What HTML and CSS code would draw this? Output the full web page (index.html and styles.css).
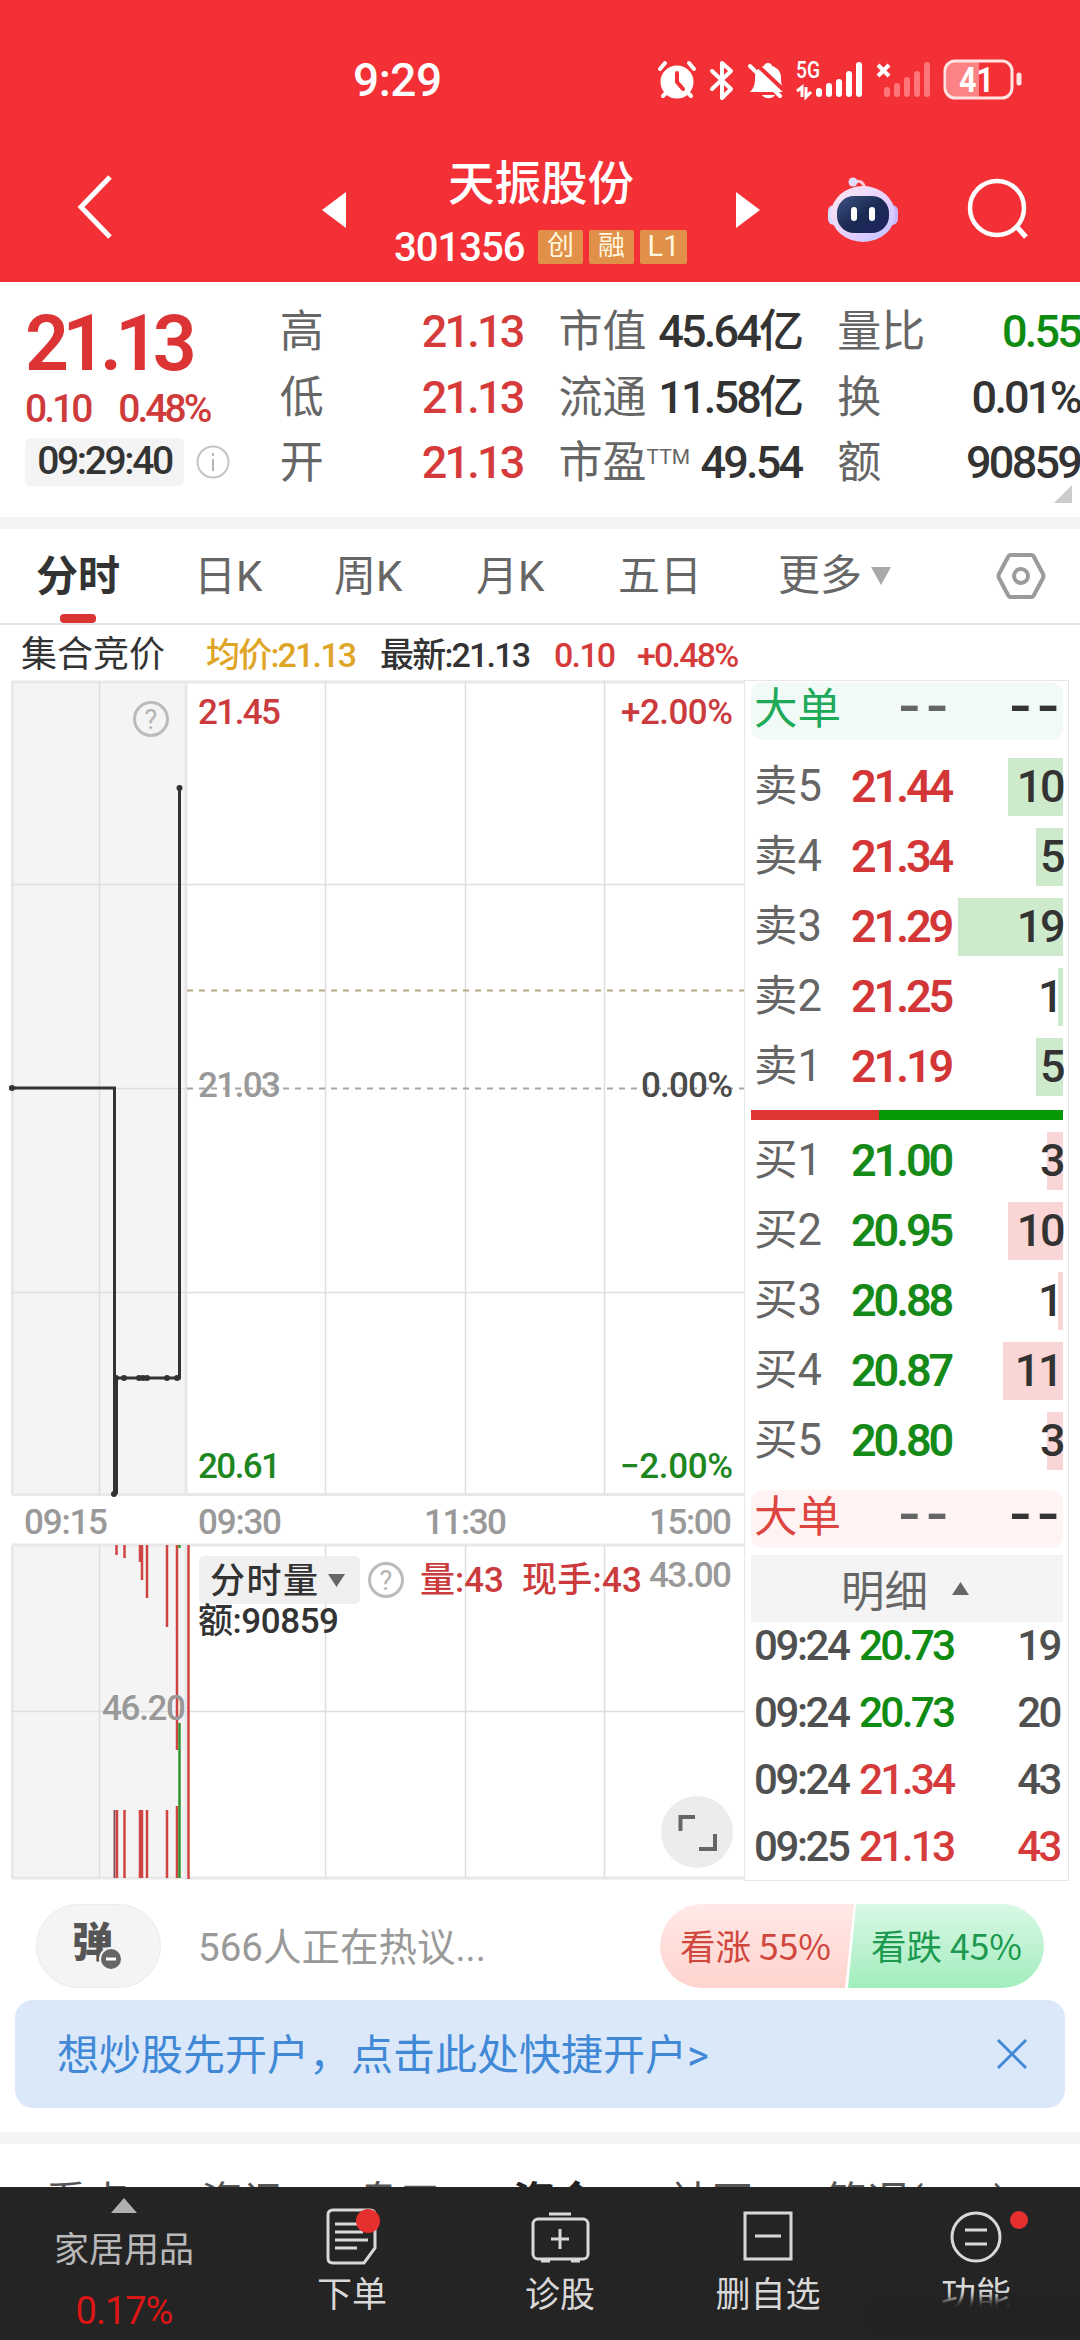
FILE: index.html
```
<!DOCTYPE html>
<html lang="zh-CN">
<head>
  <meta charset="UTF-8">
  <title>天振股份 301356</title>
  <link rel="stylesheet" href="styles.css">
</head>
<body>
  <header id="siteHeader">
    <div class="status-bar">
      <span class="clock">9:29</span>
      <svg class="status-icons" width="368" height="44" viewBox="0 0 368 44">
        <!-- alarm -->
        <g stroke="#fff" stroke-width="4" stroke-linecap="round" fill="none">
          <circle cx="20" cy="23" r="15" fill="#fff" stroke-width="3"/>
          <path d="M3 10l5-6M37 10l-5-6M6 37l4-4M34 37l-4-4"/>
          <path d="M20 14v9l6 7" stroke="#f23036"/>
        </g>
        <!-- bluetooth -->
        <path d="M55 12l19 18-9 9V4l9 8-19 18" fill="none" stroke="#fff" stroke-width="4" stroke-linejoin="round" stroke-linecap="round"/>
        <!-- muted bell -->
        <g transform="translate(-3 0)">
          <path d="M96 33c4-4 5-8 5-14 0-8 4-11 9-12 0-4 8-4 8 0 6 2 9 6 9 12 0 6 1 10 5 14z" fill="#fff"/>
          <path d="M108 36a7 5 0 0 0 13 0z" fill="#fff"/>
          <path d="M100 3l36 34" stroke="#f23036" stroke-width="4"/>
          <path d="M96 7l30 30" stroke="#fff" stroke-width="4" stroke-linecap="round"/>
        </g>
        <text x="139" y="19" class="net" textLength="24" lengthAdjust="spacingAndGlyphs">5G</text>
        <path d="M140 32l5-4v10M149 28v10l5-5" fill="none" stroke="#fff" stroke-width="3"/>
        <path d="M162 36v-3M172 36v-8M182 36v-12M192 36V16M202 36V7" transform="translate(0 -1)" stroke="#fff" stroke-width="6" stroke-linecap="round"/>
        <path d="M221 6l11 11M232 6l-11 11" stroke="#fff" stroke-width="4"/>
        <path d="M230 36v-4M240 36v-8M250 36V22M260 36V16M270 36V7" transform="translate(0 -1)" stroke="#ff7678" stroke-width="6" stroke-linecap="round"/>
        <path d="M298 3h24v36h-24q-8 0-8-8V11q0-8 8-8z" fill="#fb8385"/>
        <rect x="288" y="2" width="67" height="37" rx="10" fill="none" stroke="#ffe3e3" stroke-width="3"/>
        <path d="M362 16v8" stroke="#ffe3e3" stroke-width="5" stroke-linecap="round"/>
        <text x="302" y="33" class="battery" textLength="35" lengthAdjust="spacingAndGlyphs">41</text>
      </svg>
    </div>
    <div class="title-bar">
      <svg class="back" width="40" height="68" viewBox="0 0 40 68"><path d="M35 3L6 33l29 30" fill="none" stroke="#fff" stroke-width="5"/></svg>
      <svg class="prev" width="24" height="36" viewBox="0 0 24 36"><path d="M24 0v36L0 18z" fill="#fff"/></svg>
      <div class="stock">
        <h1>天振股份</h1>
        <div class="code"><span>301356</span><i>创</i><i>融</i><i class="l1">L1</i></div>
      </div>
      <svg class="next" width="24" height="36" viewBox="0 0 24 36"><path d="M0 0v36l24-18z" fill="#fff"/></svg>
      <svg class="robot" width="72" height="68" viewBox="0 0 72 68">
        <defs>
          <linearGradient id="head" x1="0" y1="0" x2="1" y2="1"><stop offset="0" stop-color="#ffeaf2"/><stop offset=".6" stop-color="#e3ceff"/><stop offset="1" stop-color="#b9c4ff"/></linearGradient>
          <linearGradient id="face" x1="0" y1="0" x2="1" y2="1"><stop offset="0" stop-color="#3d5282"/><stop offset=".5" stop-color="#1b2a52"/><stop offset="1" stop-color="#1e2461"/></linearGradient>
        </defs>
        <path d="M27 6c6-2 9 0 11 6" fill="none" stroke="#ffc9d9" stroke-width="3"/>
        <circle cx="26" cy="6" r="4.500" fill="#e2dcff"/>
        <rect x="1" y="29" width="12" height="20" rx="6" fill="#d9dcff"/>
        <rect x="59" y="29" width="12" height="20" rx="6" fill="#c9b6fa"/>
        <ellipse cx="36" cy="38" rx="32" ry="28" fill="url(#head)"/>
        <rect x="10" y="20" width="52" height="37" rx="17" fill="url(#face)"/>
        <path d="M27 34v8M45 34v8" stroke="#fff" stroke-width="6" stroke-linecap="round"/>
      </svg>
      <svg class="search" width="62" height="62" viewBox="0 0 62 62"><circle cx="30" cy="30" r="27" fill="none" stroke="#fff" stroke-width="4.500"/><path d="M49 48l10 11" stroke="#fff" stroke-width="5"/></svg>
    </div>
  </header>

  <section id="quote">
    <div class="now">
      <div class="price">21.13</div>
      <div class="change"><span>0.10</span><span>0.48%</span></div>
      <div class="stamp">
        <span>09:29:40</span>
        <svg width="36" height="36" viewBox="0 0 36 36"><circle cx="18" cy="18" r="15.500" fill="none" stroke="#c4c4c4" stroke-width="2"/><path d="M18 15v12M18 9v3" stroke="#b5b5b5" stroke-width="2"/></svg>
      </div>
    </div>
    <dl>
      <div><dt>高</dt><dd class="up">21.13</dd></div>
      <div><dt>低</dt><dd class="up">21.13</dd></div>
      <div><dt>开</dt><dd class="up">21.13</dd></div>
    </dl>
    <dl>
      <div><dt>市值</dt><dd>45.64亿</dd></div>
      <div><dt>流通</dt><dd>11.58亿</dd></div>
      <div><dt>市盈<sup>TTM</sup></dt><dd>49.54</dd></div>
    </dl>
    <dl>
      <div><dt>量比</dt><dd class="down">0.55</dd></div>
      <div><dt>换</dt><dd>0.01%</dd></div>
      <div><dt>额</dt><dd>90859</dd></div>
    </dl>
    <span class="corner"></span>
  </section>

  <nav id="periods">
    <a class="active">分时</a>
    <a>日K</a>
    <a>周K</a>
    <a>月K</a>
    <a>五日</a>
    <a class="more">更多<svg width="22" height="18" viewBox="0 0 22 18"><path d="M1 0h20L11 18z" fill="#a9a9a9"/></svg></a>
    <svg class="settings" width="50" height="48" viewBox="0 0 50 48"><path d="M15 3h20q2 0 3 2l9 17q1 2 0 4l-9 17q-1 2-3 2H15q-2 0-3-2L3 26q-1-2 0-4l9-17q1-2 3-2z" fill="none" stroke="#9b9b9b" stroke-width="4"/><circle cx="25" cy="24" r="7" fill="none" stroke="#9b9b9b" stroke-width="4"/></svg>
  </nav>

  <div id="summary">
    <span class="name">集合竞价</span>
    <span class="avg">均价:21.13</span>
    <span class="last">最新:21.13</span>
    <span class="up diff">0.10</span>
    <span class="up">+0.48%</span>
  </div>

  <main id="market">
    <div id="charts">
      <svg width="744" height="1201" viewBox="0 680 744 1201">
        <g class="plot">
          <rect x="12" y="681" width="175" height="813" fill="#f4f4f4"/>
          <rect x="12" y="1545" width="175" height="333" fill="#f4f4f4"/>
          <path class="frame" d="M12 682H744M12 1494.500H744M12 1545H744M12 1878H744M12.500 681V1494M12.500 1545V1878M186 681V1494M186 1545V1878"/>
          <path class="grid" d="M12 884.500H744M12 1088.500H187M12 1292.500H744M12 1711.500H744M99.500 681V1494M325.500 681V1494M465.500 681V1494M604.500 681V1494M99.500 1545V1878M325.500 1545V1878M465.500 1545V1878M604.500 1545V1878"/>
          <path d="M187 990.500H744" stroke="#b3ab85" stroke-width="2" stroke-dasharray="6 6"/>
          <path d="M187 1088.500H744" stroke="#a5a5a5" stroke-width="2" stroke-dasharray="6 6"/>
        </g>

        <!-- auction price line -->
        <path d="M9 1088H114.500V1494M114 1378H179.500V788" fill="none" stroke="#333" stroke-width="3"/>
        <path d="M116 1378V1494" stroke="#333" stroke-width="4"/>
        <g fill="#333">
          <circle cx="12" cy="1088" r="3"/><circle cx="114" cy="1494" r="3"/><circle cx="116" cy="1378" r="3"/>
          <circle cx="124" cy="1378" r="3"/><circle cx="139" cy="1378" r="3"/><circle cx="143" cy="1378" r="3"/>
          <circle cx="147" cy="1378" r="3"/><circle cx="167" cy="1378" r="3"/><circle cx="177" cy="1378" r="3"/>
          <circle cx="179.500" cy="788" r="3"/>
        </g>

        <g class="axis">
          <text class="up" x="198" y="724" textLength="83">21.45</text>
          <text class="up" x="621" y="724" textLength="112">+2.00%</text>
          <text x="198" y="1097" textLength="83">21.03</text>
          <text class="dark" x="641" y="1097" textLength="92">0.00%</text>
          <text class="down" x="198" y="1478" textLength="83">20.61</text>
          <text class="down" x="620" y="1478" textLength="113">−2.00%</text>
          <text x="24" y="1534" textLength="84">09:15</text>
          <text x="198" y="1534" textLength="84">09:30</text>
          <text x="424" y="1534" textLength="83">11:30</text>
          <text x="649" y="1534" textLength="83">15:00</text>
          <text x="649" y="1587" textLength="83">43.00</text>
        </g>

        <!-- volume bars -->
        <g stroke="#cf4443" stroke-width="2.500">
          <path d="M116.500 1545V1555M124.500 1545V1558M140 1545V1562M142 1545V1580M147 1545V1598M167 1545V1627M177 1545V1750M188.500 1545V1879"/>
          <path d="M117 1810V1878M124.500 1810V1878M140 1810V1878M142 1810V1878M147 1810V1878M167 1810V1878M177 1806V1878"/>
        </g>
        <path d="M114.500 1810V1878" stroke="#8a5054" stroke-width="2"/>
        <path d="M179.500 1545V1548M179.500 1723V1878" stroke="#2f962f" stroke-width="2.500"/>
        <g class="axis"><text x="102" y="1720" textLength="84">46.20</text></g>

        <g class="help">
          <circle cx="151" cy="719" r="16.500"/><text x="151" y="729">?</text>
          <circle cx="386" cy="1580" r="16.500"/><text x="386" y="1590">?</text>
        </g>

        <rect x="199" y="1556" width="161" height="48" rx="5" fill="#f0f0f0"/>
        <path d="M328 1574h17l-8.500 13z" fill="#666"/>
        <g class="legend">
          <text x="210" y="1593" textLength="108">分时量</text>
          <text class="up" x="420" y="1592" textLength="84">量:43</text>
          <text class="up" x="522" y="1592" textLength="120">现手:43</text>
          <text x="198" y="1633" textLength="141">额:90859</text>
        </g>

        <circle cx="697" cy="1832" r="36" fill="#ececec"/>
        <path d="M680.500 1831V1817H695M715 1834V1849H699" fill="none" stroke="#666" stroke-width="4"/>
      </svg>
    </div>

    <aside id="book">
      <div class="big sell"><b>大单</b><span>--</span><em>--</em></div>
      <ul class="asks">
        <li><span>卖5</span><b>21.44</b><em>10</em><i style="width:55px"></i></li>
        <li><span>卖4</span><b>21.34</b><em>5</em><i style="width:27px"></i></li>
        <li><span>卖3</span><b>21.29</b><em>19</em><i style="width:105px"></i></li>
        <li><span>卖2</span><b>21.25</b><em class="one">1</em><i style="width:5px"></i></li>
        <li><span>卖1</span><b>21.19</b><em>5</em><i style="width:27px"></i></li>
      </ul>
      <div class="ratio"><i style="width:41%"></i></div>
      <ul class="bids">
        <li><span>买1</span><b>21.00</b><em>3</em><i style="width:16px"></i></li>
        <li><span>买2</span><b>20.95</b><em>10</em><i style="width:55px"></i></li>
        <li><span>买3</span><b>20.88</b><em class="one">1</em><i style="width:5px"></i></li>
        <li><span>买4</span><b>20.87</b><em class="one">11</em><i style="width:60px"></i></li>
        <li><span>买5</span><b>20.80</b><em>3</em><i style="width:16px"></i></li>
      </ul>
      <div class="big buy"><b>大单</b><span>--</span><em>--</em></div>
      <div class="detail-head">明细<svg width="17" height="13" viewBox="0 0 17 13"><path d="M8.500 0L17 13H0z" fill="#666"/></svg></div>
      <ul class="ticks">
        <li><span>09:24</span><b class="down">20.73</b><em>19</em></li>
        <li><span>09:24</span><b class="down">20.73</b><em>20</em></li>
        <li><span>09:24</span><b class="up">21.34</b><em>43</em></li>
        <li><span>09:25</span><b class="up">21.13</b><em class="up">43</em></li>
      </ul>
    </aside>
  </main>

  <div id="talk">
    <div class="danmu"><b>弹</b><svg width="24" height="24" viewBox="0 0 24 24"><circle cx="12" cy="12" r="11" fill="#666" stroke="#f4f4f4" stroke-width="2"/><path d="M7 12h10" stroke="#fff" stroke-width="3"/></svg></div>
    <span class="hot">566人正在热议...</span>
    <div class="vote">
      <span class="rise">看涨 55%</span>
      <span class="fall">看跌 45%</span>
    </div>
  </div>

  <div id="banner">
    <span>想炒股先开户，点击此处快捷开户&gt;</span>
    <svg width="32" height="32" viewBox="0 0 32 32"><path d="M2 2l28 28M30 2L2 30" stroke="#4189d6" stroke-width="3"/></svg>
  </div>

  <div id="sections">
    <span>看点</span><span>资讯</span><span>盘口</span><span class="active">资金</span><span>社区</span><span>简况(F10)</span>
  </div>

  <footer id="tabbar">
    <div class="industry">
      <svg width="26" height="15" viewBox="0 0 26 15"><path d="M13 0l13 15H0z" fill="#b0b0b0"/></svg>
      <span>家居用品</span>
      <em>0.17%</em>
    </div>
    <div class="tab">
      <svg width="70" height="62" viewBox="0 0 70 62"><path d="M16 6h37q5 0 5 5v33L47 59H16q-5 0-5-5V11q0-5 5-5z"/><path d="M18 20h28M18 28h28M18 36h33M18 44h22"/><circle class="dot" cx="51" cy="17" r="12"/></svg>
      下单
    </div>
    <div class="tab">
      <svg width="70" height="62" viewBox="0 0 70 62"><rect x="8" y="15" width="55" height="40" rx="5"/><path d="M24 10h22M35 25v20M26 35h18M16 57h9M46 57h9"/></svg>
      诊股
    </div>
    <div class="tab">
      <svg width="70" height="62" viewBox="0 0 70 62"><rect x="12" y="9" width="46" height="46"/><path d="M22 32h26"/></svg>
      删自选
    </div>
    <div class="tab last">
      <svg width="110" height="62" viewBox="-20 0 110 62"><circle cx="35" cy="33" r="24"/><path d="M24 26h22M24 40h22"/><circle class="dot" cx="78" cy="16" r="9"/></svg>
      功能
      <i class="smudge"></i>
    </div>
  </footer>
</body>
</html>
```
FILE: styles.css
```
* {
  box-sizing: border-box;
}

body {
  margin: 0;
  width: 1080px;
  height: 2340px;
  overflow: hidden;
  background: #fff;
  color: #333;
  font-family: Roboto, "Noto Sans CJK SC", sans-serif;
}

ul, dl, dd, h1 {
  margin: 0;
  padding: 0;
  list-style: none;
}

em, i {
  font-style: normal;
}

svg {
  display: block;
  flex: none;
}

.up {
  color: #d63b3b;
  fill: #d63b3b;
}

.down {
  color: #0f8b12;
  fill: #0f8b12;
}

#siteHeader {
  height: 282px;
  background: #f23036;
  color: #fff;
}

.status-bar {
  height: 140px;
  padding: 59px 0 0 353px;
  display: flex;
}

.clock {
  width: 304px;
  font-size: 46px;
  line-height: 42px;
  font-weight: 500;
  letter-spacing: -0.5px;
}

.net {
  font-size: 23px;
  font-weight: 500;
  fill: #fff;
}

.battery {
  font-size: 35px;
  font-weight: 700;
  fill: #fff;
}

.title-bar {
  display: flex;
  height: 141px;
  padding-left: 75px;
}

.back {
  margin: 34px 207px 0 0;
}

.prev, .next {
  margin-top: 52px;
}

.stock {
  width: 390px;
  text-align: center;
}

.stock h1 {
  margin-top: 11px;
  font-size: 46.5px;
  line-height: 66px;
  font-weight: 500;
}

.code {
  display: flex;
  align-items: center;
  height: 36px;
  margin: 12px 0 0 48px;
  font-size: 40px;
  font-weight: 500;
}

.code span {
  width: 144px;
  text-align: left;
  letter-spacing: -1px;
}

.code i {
  width: 45px;
  height: 34px;
  margin-right: 6px;
  border-radius: 2px;
  background: #e09048;
  color: #fff6de;
  font-size: 27px;
  line-height: 33px;
  font-weight: 400;
}

.code .l1 {
  width: 47px;
  font-size: 29px;
}

.robot {
  margin: 36px 0 0 67px;
}

.search {
  margin: 38px 0 0 68px;
}

#quote {
  position: relative;
  display: flex;
  height: 247px;
  padding: 17px 0 0 25px;
  border-bottom: 12px solid #f4f4f4;
}

.now {
  width: 255px;
}

.price {
  margin-top: 5px;
  font-size: 77px;
  line-height: 80px;
  font-weight: 600;
  letter-spacing: -6.5px;
  color: #dc3434;
}

.change {
  display: flex;
  gap: 28px;
  height: 50px;
  font-size: 39px;
  line-height: 50px;
  font-weight: 500;
  letter-spacing: -3px;
  color: #cf3a3a;
}

.stamp {
  display: flex;
  align-items: center;
  gap: 11px;
  margin-top: 4px;
}

.stamp span {
  width: 159px;
  height: 48px;
  border-radius: 5px;
  background: #f4f4f4;
  font-size: 39px;
  line-height: 47px;
  font-weight: 500;
  letter-spacing: -2.4px;
  text-align: center;
}

#quote dl {
  width: 243px;
  margin-right: 36px;
}

#quote dl:last-of-type {
  margin-right: 0;
}

#quote dl div {
  display: flex;
  justify-content: space-between;
  height: 65.5px;
  line-height: 66px;
  font-size: 44px;
  white-space: nowrap;
}

dt {
  color: #666;
}

dd {
  font-size: 45px;
  font-weight: 500;
  letter-spacing: -2.8px;
}

sup {
  font-size: 21px;
  line-height: 0;
  vertical-align: 14px;
}

.corner {
  position: absolute;
  right: 8px;
  bottom: 14px;
  border-left: 18px solid transparent;
  border-bottom: 18px solid #ccc;
}

#periods {
  display: flex;
  align-items: center;
  height: 96px;
  padding-left: 36px;
  border-bottom: 2px solid #e4e4e4;
  font-size: 42px;
  color: #666;
}

#periods a {
  width: 142px;
  height: 94px;
  line-height: 96px;
}

#periods a:first-child {
  width: 158px;
}

#periods .active {
  position: relative;
  color: #333;
  font-weight: 700;
}

#periods .active::after {
  content: "";
  position: absolute;
  left: 24px;
  bottom: 0;
  width: 36px;
  height: 9px;
  border-radius: 4px;
  background: #da3535;
}

#periods a:nth-child(2) {
  width: 140px;
}

#periods a:nth-child(5) {
  width: 160px;
}

#periods .more {
  display: flex;
  align-items: center;
  gap: 8px;
  width: 218px;
}

#summary {
  display: flex;
  height: 55px;
  padding-left: 21px;
  line-height: 60px;
  font-size: 34px;
  white-space: nowrap;
}

#summary span {
  letter-spacing: -1.8px;
  font-weight: 500;
}

#summary .name {
  width: 185px;
  font-size: 36px;
  font-weight: 400;
  letter-spacing: 0;
}

#summary .avg {
  width: 174px;
  color: #dfa526;
}

#summary .last {
  width: 174px;
}

#summary .diff {
  width: 83px;
}

#market {
  display: flex;
  height: 1201px;
}

.frame {
  fill: none;
  stroke: #e8e8e8;
  stroke-width: 3;
}

.grid {
  fill: none;
  stroke: #dedede;
  stroke-width: 1.5;
}

.axis text {
  font-size: 35px;
  font-weight: 500;
  fill: #999;
}

.axis .up {
  fill: #cb3b3d;
}

.axis .down {
  fill: #1d861e;
}

.axis .dark {
  fill: #4a4a4a;
}

.help circle {
  fill: none;
  stroke: #bbb;
  stroke-width: 3;
}

.help text {
  font-size: 27px;
  text-anchor: middle;
  fill: #b3b3b3;
}

.legend text {
  font-size: 35px;
  font-weight: 500;
  fill: #333;
}

.legend .up {
  fill: #cb3b3d;
}

#book {
  width: 325px;
  padding: 1px 5px 0 6px;
  border: 1px solid #e6e6e6;
  font-size: 43.5px;
}

.big {
  display: flex;
  align-items: center;
  height: 58px;
  padding-left: 3px;
  border-radius: 12px;
  line-height: 50px;
  white-space: nowrap;
}

.big b {
  flex: none;
  width: 144px;
  padding-bottom: 3px;
  font-weight: 400;
}

.big span, .big em {
  flex: none;
  width: 111px;
  height: 58px;
  font-family: "Liberation Sans", sans-serif;
  font-size: 68px;
  line-height: 42px;
  letter-spacing: 5px;
  color: #666;
}

.big em {
  width: 54px;
  color: #333;
}

.sell {
  background: #f1faf7;
}

.sell b {
  color: #1faa5a;
}

.buy {
  margin-top: 20px;
  background: #fff4f3;
}

.buy b {
  color: #dd4540;
}

.asks {
  padding-top: 18px;
}

.asks li, .bids li {
  position: relative;
  display: flex;
  height: 58px;
  margin-bottom: 12px;
  padding-left: 3px;
  line-height: 58px;
}

.asks span, .bids span {
  width: 97px;
  color: #666;
}

#book li b {
  width: 110px;
  font-size: 45px;
  font-weight: 600;
  letter-spacing: -3.1px;
}

.asks b {
  color: #d23636;
}

.bids b {
  color: #168a18;
}

#book li em {
  position: relative;
  z-index: 1;
  flex: 1;
  font-size: 45px;
  font-weight: 500;
  letter-spacing: -2.5px;
  text-align: right;
}

#book li .one {
  padding-right: 2px;
}

/* volume bar behind the number */
.asks i, .bids i {
  position: absolute;
  top: 0;
  right: 0;
  height: 58px;
  background: #cdeacd;
}

.bids i {
  background: #fad5d5;
}

.ratio {
  height: 10px;
  margin: 14px 0 12px;
  background: #069806;
}

.asks li:last-child {
  margin-bottom: 0;
}

.ratio i {
  display: block;
  height: 10px;
  background: #e03535;
}

.detail-head {
  display: flex;
  align-items: center;
  justify-content: center;
  gap: 24px;
  height: 67px;
  margin-top: 7px;
  padding-right: 4px;
  background: #f4f4f4;
  color: #666;
}

.ticks li {
  display: flex;
  height: 67px;
  padding: 0 3px;
  line-height: 47px;
}

.ticks span {
  width: 105px;
  font-size: 42px;
  font-weight: 500;
  letter-spacing: -2.4px;
  color: #505050;
}

#book .ticks b {
  font-size: 42.5px;
  letter-spacing: -2.8px;
  font-weight: 500;
}

#book .ticks em {
  font-size: 42px;
}

.ticks em:not(.up) {
  color: #505050;
}

#talk {
  display: flex;
  align-items: center;
  height: 84px;
  margin: 23px 36px 0;
}

.danmu {
  display: flex;
  align-items: center;
  width: 125px;
  height: 84px;
  padding-left: 35px;
  border: 1px solid #ececec;
  border-radius: 42px;
  background: #f4f4f4;
  color: #555;
  font-size: 41px;
}

.danmu b {
  font-weight: 900;
  line-height: 60px;
  padding-bottom: 6px;
}

.danmu svg {
  margin: 25px 0 0 -14px;
}

.hot {
  width: 462px;
  margin-left: 37px;
  padding-bottom: 5px;
  font-size: 38.5px;
  color: #999;
}

.vote {
  display: flex;
  width: 384px;
  height: 84px;
  border-radius: 42px;
  overflow: hidden;
  font-family: "Noto Sans CJK SC", sans-serif;
  font-size: 35.5px;
  line-height: 82px;
}

.vote span {
  width: 196px;
  padding-left: 20px;
  white-space: nowrap;
}

.rise {
  background: linear-gradient(#ffe9e7, #ffd3cd);
  clip-path: polygon(0 0, 194px 0, 185px 100%, 0 100%);
  color: #d0473d;
}

.vote .fall {
  width: 198px;
  margin-left: -6px;
  padding-left: 23px;
  background: linear-gradient(#daf8e6, #a1edbd);
  clip-path: polygon(8px 0, 100% 0, 100% 100%, 0 100%);
  color: #1d9a50;
}

#banner {
  display: flex;
  align-items: center;
  justify-content: space-between;
  height: 108px;
  margin: 12px 15px 24px;
  padding: 0 37px 0 42px;
  border-radius: 18px;
  background: #dbe8fa;
  color: #4189d6;
  font-size: 42px;
}

#banner span {
  padding-bottom: 6px;
}

#sections {
  display: flex;
  height: 55px;
  overflow: hidden;
  border-top: 12px solid #f4f4f4;
  padding: 24px 0 0 45px;
  font-size: 42px;
  color: #555;
}

#sections span {
  width: 156px;
  white-space: nowrap;
}

#sections .active {
  font-weight: 700;
  color: #222;
}

#tabbar {
  display: flex;
  height: 153px;
  background: #242424;
  color: #d8d8d8;
  font-size: 35px;
}

.industry {
  display: flex;
  flex-direction: column;
  align-items: center;
  width: 248px;
  padding-top: 11px;
  color: #b8b8b8;
}

.industry span {
  margin-top: 13px;
  line-height: 50px;
}

.industry em {
  margin-top: 13px;
  font-size: 38px;
  line-height: 44px;
  letter-spacing: -1px;
  color: #dc1515;
}

.tab {
  position: relative;
  display: flex;
  flex-direction: column;
  align-items: center;
  width: 208px;
  padding-top: 17px;
  line-height: 60px;
}

.tab svg {
  fill: none;
  stroke: #d8d8d8;
  stroke-width: 3;
}

.tab .dot {
  fill: #e63030;
  stroke: none;
}

.smudge {
  position: absolute;
  left: 0;
  top: 112px;
  width: 208px;
  height: 34px;
  background: #222;
  filter: blur(4px);
}
```
